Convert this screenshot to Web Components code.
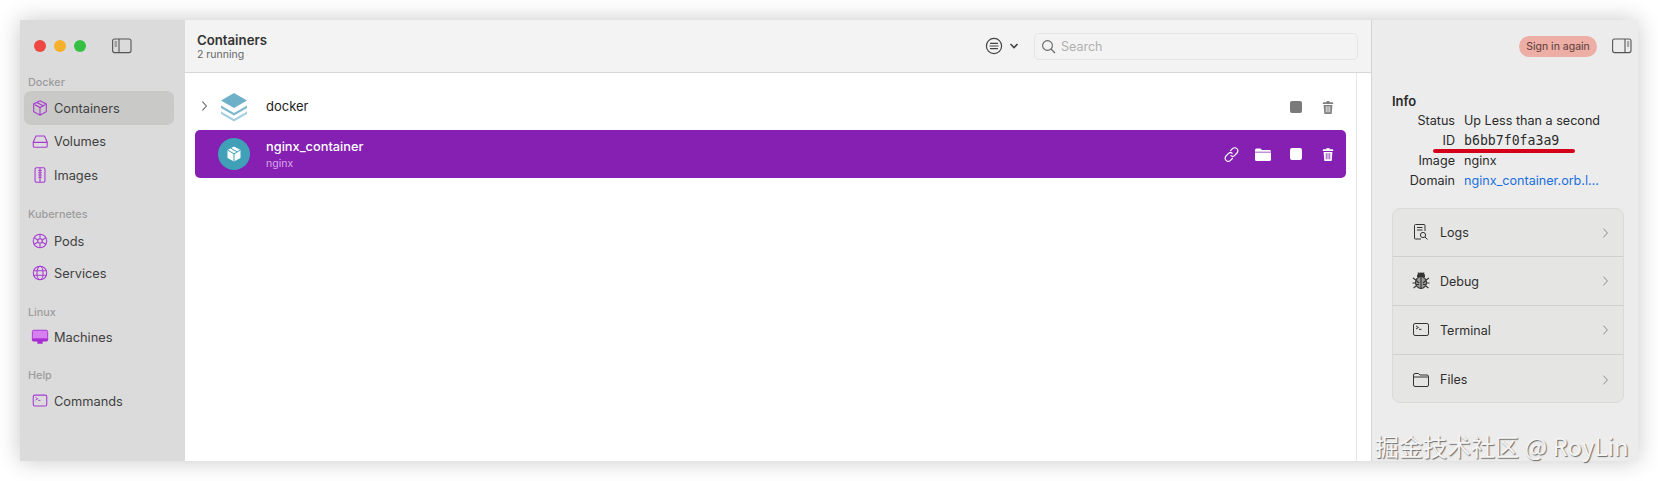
<!DOCTYPE html>
<html><head><meta charset="utf-8"><title>OrbStack Containers</title>
<style>
html,body{margin:0;background:#fff}
body{padding:20px;height:481px;box-sizing:border-box;font-family:Inter,"Noto Sans CJK SC",sans-serif;overflow:hidden}
</style></head><body>
<app-window></app-window>
<script>
const I={
cube:'<path d="M10 2 17 5.5V14L10 18 3 14V5.5Z M3 5.5 10 9.5 17 5.5 M10 9.5V18 M6.5 3.8 13.5 7.5"/>',
vol:'<path d="M2.5 11 5.5 4.5H15L18 11V15.5Q18 17 16.5 17H4Q2.5 17 2.5 15.5Z M2.5 11.5H18"/>',
img:'<rect x="4.5" y="2" width="11" height="16" rx="1.5"/><path d="M10 2V18 M8 5H12 M8 7.5H12 M8 10H12 M8 12.5H12"/>',
pod:'<circle cx="10" cy="10" r="7.5"/><circle cx="10" cy="10" r="2.5"/><path d="M10 2.5V7.5 M10 12.5V17.5 M3.5 6.3 7.8 8.8 M12.2 11.2 16.5 13.7 M16.5 6.3 12.2 8.8 M7.8 11.2 3.5 13.7"/>',
svc:'<circle cx="10" cy="10" r="7.5"/><ellipse cx="10" cy="10" rx="3.4" ry="7.5"/><path d="M3 7.5H17 M3 12.5H17"/>',
term:'<rect x="2.5" y="3.5" width="15" height="12" rx="1.6"/><path d="M5 6 7.5 7.5 5 9 M8 9.3H10.5" stroke-width="1"/>',
chev:'<path d="M3 1.5 8 7 3 12.5"/>',
trash:'<path fill="currentColor" stroke="none" d="M3 2.5H6L6.6 1H9.4L10 2.5H13Q14 2.5 14 3.5V4.5H2V3.5Q2 2.5 3 2.5Z M3 5.5H13L12.3 15Q12.2 16 11.2 16H4.8Q3.8 16 3.7 15Z"/><path stroke="var(--tb,#fff)" stroke-width=".9" d="M6 7V14 M8 7V14 M10 7V14" fill="none"/>'
};
function svg(name,w,h,vb){return `<svg width="${w}" height="${h}" viewBox="${vb}" fill="none" stroke="currentColor" stroke-width="1.2">${I[name]}</svg>`}
class SideItem extends HTMLElement{
 connectedCallback(){
  const r=this.attachShadow({mode:'open'});
  const ic=this.getAttribute('icon');
  let icon= ic==='mac'?`<svg width="18" height="18" viewBox="0 0 20 20"><rect x="1.5" y="2.5" width="17" height="12" rx="1.5" fill="#d67ff0" stroke="#a62ed0"/><rect x="1.5" y="11.5" width="17" height="3" fill="#a62ed0"/><path d="M7 14.5H13V17.5H7Z" fill="#a62ed0"/></svg>`:svg(ic,18,18,'0 0 20 20');
  r.innerHTML=`<style>:host{display:flex;align-items:center;height:34px;margin:var(--m,0) 11px 0 4px;border-radius:7px;font-size:12.8px;color:#3f3f3f;padding-left:7px;gap:5px;box-sizing:border-box}
  :host([active]){background:#c9c9c7}
  .i{width:18px;height:18px;color:#a83ad2;display:flex}</style><span class="i">${icon}</span><slot></slot>`;
 }
}
customElements.define('side-item',SideItem);
class SideHead extends HTMLElement{
 connectedCallback(){this.attachShadow({mode:'open'}).innerHTML=`<style>:host{display:block;font-size:10.8px;font-weight:500;color:#9b9b9b;padding-left:8px;height:13px;line-height:13px}</style><slot></slot>`}
}
customElements.define('side-head',SideHead);
class AppSidebar extends HTMLElement{
 connectedCallback(){this.attachShadow({mode:'open'}).innerHTML=`<style>
 :host{display:flex;flex-direction:column;width:165px;flex:none;background:#dbdbdb;box-sizing:border-box;padding-top:18px}
 .top{display:flex;align-items:center;height:16px;padding-left:14px;gap:8px;margin-bottom:22px}
 .d{width:12px;height:12px;border-radius:50%}
 .t{margin-left:18px;color:#555;display:flex}
 </style>
 <div class="top"><span class="d" style="background:#ee4640"></span><span class="d" style="background:#f6b02c"></span><span class="d" style="background:#35c043"></span>
 <span class="t"><svg width="20" height="16" viewBox="0 0 20 16" fill="none" stroke="currentColor" stroke-width="1.1"><rect x=".6" y="1" width="18.4" height="13.6" rx="2"/><path d="M7 1V14.6"/><path d="M2.6 4H5 M2.6 6H5 M2.6 8H5" stroke-width=".9"/></svg></span></div>
 <slot></slot>`}
}
customElements.define('app-sidebar',AppSidebar);
class MainToolbar extends HTMLElement{
 connectedCallback(){this.attachShadow({mode:'open'}).innerHTML=`<style>
 :host{display:flex;align-items:center;height:53px;flex:none;background:#f3f3f3;border-bottom:1px solid #d6d6d6;box-sizing:border-box;padding:0 13px 0 12px;color:#333}
 .ti{flex:1}.a{font-size:13.2px;font-weight:600;line-height:16px;color:#333}.b{font-size:10.5px;color:#666;line-height:13px}
 .m{display:flex;align-items:center;gap:6px;margin-right:15px;color:#444}
 .s{width:324px;height:27px;box-sizing:border-box;border:1px solid #e5e5e5;border-radius:5px;display:flex;align-items:center;padding-left:6px;gap:5px;font-size:12.5px;color:#b0b0b0}
 </style><div class="ti"><div class="a">Containers</div><div class="b">2 running</div></div>
 <div class="m"><svg width="18" height="18" viewBox="0 0 18 18" fill="none" stroke="currentColor" stroke-width="1.2"><circle cx="9" cy="9" r="7.6"/><path d="M5 6.3H13 M4.5 9H13.5 M5 11.7H13"/></svg>
 <svg width="10" height="8" viewBox="0 0 10 8" fill="none" stroke="currentColor" stroke-width="1.6"><path d="M1.5 2 5 5.5 8.5 2"/></svg></div>
 <div class="s"><svg width="15" height="15" viewBox="0 0 15 15" fill="none" stroke="#666" stroke-width="1.1"><circle cx="6.5" cy="6.5" r="4.9"/><path d="M10 10 14 14"/></svg><span>Search</span></div>`}
}
customElements.define('main-toolbar',MainToolbar);
class GroupRow extends HTMLElement{
 connectedCallback(){this.attachShadow({mode:'open'}).innerHTML=`<style>
 :host{display:flex;align-items:center;height:34px;margin:17px 11px 0 10px;color:#222;font-size:13px}
 .c{width:10px;margin-left:5px;color:#666;display:flex;margin-top:-2px}.l{margin-left:10px;display:flex;width:30px}.n{margin-left:16px;flex:1;margin-top:-3px}
 .a{display:flex;align-items:center;gap:19px;padding-right:10px;color:#808080;--tb:#fff}
 </style><span class="c"><svg width="8" height="14" viewBox="0 0 10 14" fill="none" stroke="currentColor" stroke-width="1.3">${I.chev}</svg></span>
 <span class="l"><svg width="28" height="30" viewBox="0 0 28 30"><path d="M14 1 27 8.5 14 16 1 8.5Z" fill="#6fb0c9"/><path d="M1 13.5 14 21 27 13.5V16L14 23.5 1 16Z" fill="#7db8cf"/><path d="M1 19.5 14 27 27 19.5V22L14 29.5 1 22Z" fill="#a3cfdf"/></svg></span>
 <span class="n">docker</span>
 <span class="a"><svg width="12" height="12"><rect width="12" height="12" rx="2" fill="#7a7a7a"/></svg><svg width="14" height="17" viewBox="0 0 16 17" fill="none">${I.trash}</svg></span>`}
}
customElements.define('group-row',GroupRow);
class ContainerRow extends HTMLElement{
 connectedCallback(){this.attachShadow({mode:'open'}).innerHTML=`<style>
 :host{display:flex;align-items:center;height:48px;margin:6px 10px 0 10px;background:#8520b2;border-radius:5px;color:#fff;font-size:12.8px}
 .av{width:32px;height:32px;border-radius:50%;background:#3fa0b8;margin-left:23px;display:flex;align-items:center;justify-content:center}
 .tx{margin-left:16px;flex:1}.a{font-weight:500;line-height:17px}.b{font-size:10.5px;color:#d9a9ec;line-height:14px;margin-top:2px}
 .ac{display:flex;align-items:center;gap:19px;padding-right:11px;--tb:#8520b2}
 .lk{margin-right:-3.5px}
 </style><span class="av"><svg width="16" height="16" viewBox="0 0 16 16"><path d="M8 .5 14.5 4V12L8 15.5 1.5 12V4Z" fill="#fff"/><path d="M1.5 4 8 7.8 14.5 4 M8 7.8V15.5 M4.8 2.2 11.2 5.9" stroke="#3fa0b8" stroke-width="1" fill="none"/></svg></span>
 <span class="tx"><div class="a">nginx_container</div><div class="b">nginx</div></span>
 <span class="ac"><svg class="lk" width="17" height="17" viewBox="0 0 17 17" fill="none" stroke="#fff" stroke-width="1.2"><path d="M7.2 5 9.5 2.7A2.8 2.8 0 0 1 14 7L11.5 9.6A2.8 2.8 0 0 1 7.5 9.4"/><path d="M9.8 12 7.5 14.3A2.8 2.8 0 0 1 3 10L5.5 7.4A2.8 2.8 0 0 1 9.5 7.6"/></svg>
 <svg width="16" height="13" viewBox="0 0 16 13"><path d="M0 2Q0 .5 1.5 .5H5.5L7 2H14.5Q16 2 16 3.5V3.8H0Z M0 4.6H16V11.5Q16 13 14.5 13H1.5Q0 13 0 11.5Z" fill="#fff"/></svg>
 <svg width="12" height="12"><rect width="12" height="12" rx="2" fill="#fff"/></svg>
 <svg width="14" height="17" viewBox="0 0 16 17" fill="none" style="color:#fff">${I.trash}</svg></span>`}
}
customElements.define('container-row',ContainerRow);
class InfoRow extends HTMLElement{
 connectedCallback(){this.attachShadow({mode:'open'}).innerHTML=`<style>
 :host{display:grid;grid-template-columns:63px 1fr;column-gap:9px;height:20px;line-height:20px;font-size:12.6px;color:#2a2a2a}
 .k{text-align:right}
 ::slotted([mono]){font-family:"DejaVu Sans Mono",monospace;font-size:13.2px}
 ::slotted([link]){color:#1a6fe0}
 </style><span class="k">${this.getAttribute('k')}</span><slot></slot>`}
}
customElements.define('info-row',InfoRow);
class ActionRow extends HTMLElement{
 connectedCallback(){
  const ic={logs:`<svg width="18" height="20" viewBox="0 0 18 20" fill="none" stroke="currentColor" stroke-width="1"><path d="M9 16H3.5Q2.5 16 2.5 15V2.5Q2.5 1.5 3.5 1.5H12Q13 1.5 13 2.5V8"/><path d="M5 4.5H10.5 M5 7H10.5" stroke-width="1.1"/><circle cx="11" cy="12" r="2.6"/><path d="M13 14 15.5 16.5"/></svg>`,
  debug:`<svg width="20" height="20" viewBox="0 0 20 20" fill="#9a9a98" stroke="currentColor" stroke-width="1.1"><path d="M6.5 5.5A3.5 3.5 0 0 1 13.5 5.5Z" fill="currentColor"/><ellipse cx="10" cy="11.5" rx="5.5" ry="6"/><path d="M10 6V17.5 M5 9.5 8 12 M15 9.5 12 12 M5 13.5H8 M12 13.5H15 M2 7 4.8 9 M18 7 15.2 9 M1.5 12H4.5 M18.5 12H15.5 M2.5 17 5.2 15 M17.5 17 14.8 15 M7 1.5 8 3.5 M13 1.5 12 3.5"/></svg>`,
  term:`<svg width="20" height="20" viewBox="0 0 20 20" fill="none" stroke="currentColor" stroke-width="1">${I.term}</svg>`,
  files:`<svg width="20" height="20" viewBox="0 0 20 20" fill="none" stroke="currentColor" stroke-width="1"><path d="M2.5 5Q2.5 3.5 4 3.5H7.5L9 5H16Q17.5 5 17.5 6.5V15Q17.5 16.5 16 16.5H4Q2.5 16.5 2.5 15Z M2.5 7H17.5"/></svg>`}[this.getAttribute('icon')];
  this.attachShadow({mode:'open'}).innerHTML=`<style>
 :host{display:flex;align-items:center;height:49px;box-sizing:border-box;border-bottom:1px solid #cfcfcd;font-size:12.5px;color:#2f2f2f;padding-left:18px}
 :host(:first-child){height:48px}
 :host(:last-child){border-bottom:0;height:47px;padding-top:2px}
 .i{width:20px;display:flex;justify-content:center;margin-right:9px;color:#333}.t{flex:1}.c{margin-right:14px;color:#888;display:flex}
 </style><span class="i">${ic}</span><span class="t"><slot></slot></span><span class="c"><svg width="8" height="14" viewBox="0 0 10 14" fill="none" stroke="currentColor" stroke-width="1.2">${I.chev}</svg></span>`}
}
customElements.define('action-row',ActionRow);
class ActionCard extends HTMLElement{
 connectedCallback(){this.attachShadow({mode:'open'}).innerHTML=`<style>:host{display:block;background:#e5e5e3;border:1px solid #dadad8;border-radius:8px;width:232px;margin:17px 0 0 20px;box-sizing:border-box;overflow:hidden}</style><slot></slot>`}
}
customElements.define('action-card',ActionCard);
class AppInspector extends HTMLElement{
 connectedCallback(){this.attachShadow({mode:'open'}).innerHTML=`<style>
 :host{display:flex;flex-direction:column;width:267px;flex:none;background:#ececec;border-left:1px solid #d4d4d4;box-sizing:border-box}
 .top{height:52px;display:flex;align-items:center;justify-content:flex-end;padding-right:6px;gap:15px;flex:none}
 .p{background:#edaea6;color:#5a3a36;font-size:10.5px;height:21px;line-height:21px;border-radius:11px;width:78px;text-align:center}
 .ic{display:flex;color:#555}
 .info{padding:21px 0 0 20px}.h{font-size:13px;font-weight:600;line-height:16px;color:#2a2a2a;margin-bottom:2px}
 </style><div class="top"><span class="p">Sign in again</span><span class="ic"><svg width="20" height="16" viewBox="0 0 20 16" fill="none" stroke="currentColor" stroke-width="1.1"><rect x=".6" y="1" width="18.4" height="13.6" rx="2"/><path d="M13 1V14.6"/><path d="M15 4H17.2 M15 6H17.2 M15 8H17.2" stroke-width=".9"/></svg></span></div>
 <div class="info"><div class="h">Info</div><slot name="info"></slot></div><slot></slot>`}
}
customElements.define('app-inspector',AppInspector);
class AppWindow extends HTMLElement{
 connectedCallback(){this.attachShadow({mode:'open'}).innerHTML=`<style>
 :host{display:flex;height:441px;width:1618px;background:#fff;box-shadow:0 0 22px rgba(0,0,0,.22);position:relative}
 .main{flex:1;display:flex;flex-direction:column;min-width:0}
 .scroll{flex:1;margin-right:14px;border-right:1px solid #e6e6e6;display:flex;flex-direction:column}
 .red{position:absolute;left:1413px;top:129px;width:142px;height:4px;background:#d4001a;border-radius:2px}
 .wm{position:absolute;left:1355px;top:411px;font-size:24px;line-height:30px;color:#f4f4f4;text-shadow:1px 1px 1px rgba(0,0,0,.55);font-family:"Noto Sans CJK SC","Noto Sans",sans-serif;white-space:nowrap}
 </style>
 <app-sidebar>
  <side-head>Docker</side-head>
  <side-item icon="cube" active style="--m:2px">Containers</side-item>
  <side-item icon="vol" style="--m:-1px">Volumes</side-item>
  <side-item icon="img" style="--m:0">Images</side-item>
  <side-head style="margin-top:16px">Kubernetes</side-head>
  <side-item icon="pod" style="--m:3px">Pods</side-item>
  <side-item icon="svc" style="--m:-2px">Services</side-item>
  <side-head style="margin-top:16px">Linux</side-head>
  <side-item icon="mac" style="--m:1px">Machines</side-item>
  <side-head style="margin-top:15px">Help</side-head>
  <side-item icon="term" style="--m:2px">Commands</side-item>
 </app-sidebar>
 <div class="main"><main-toolbar></main-toolbar><div class="scroll"><group-row></group-row><container-row></container-row></div></div>
 <app-inspector>
  <info-row slot="info" k="Status"><span>Up Less than a second</span></info-row>
  <info-row slot="info" k="ID"><span mono>b6bb7f0fa3a9</span></info-row>
  <info-row slot="info" k="Image"><span>nginx</span></info-row>
  <info-row slot="info" k="Domain"><span link>nginx_container.orb.l…</span></info-row>
  <action-card>
   <action-row icon="logs">Logs</action-row>
   <action-row icon="debug">Debug</action-row>
   <action-row icon="term">Terminal</action-row>
   <action-row icon="files">Files</action-row>
  </action-card>
 </app-inspector>
 <div class="red"></div>
 <div class="wm">掘金技术社区 @ RoyLin</div>`}
}
customElements.define('app-window',AppWindow);
</script></body></html>
